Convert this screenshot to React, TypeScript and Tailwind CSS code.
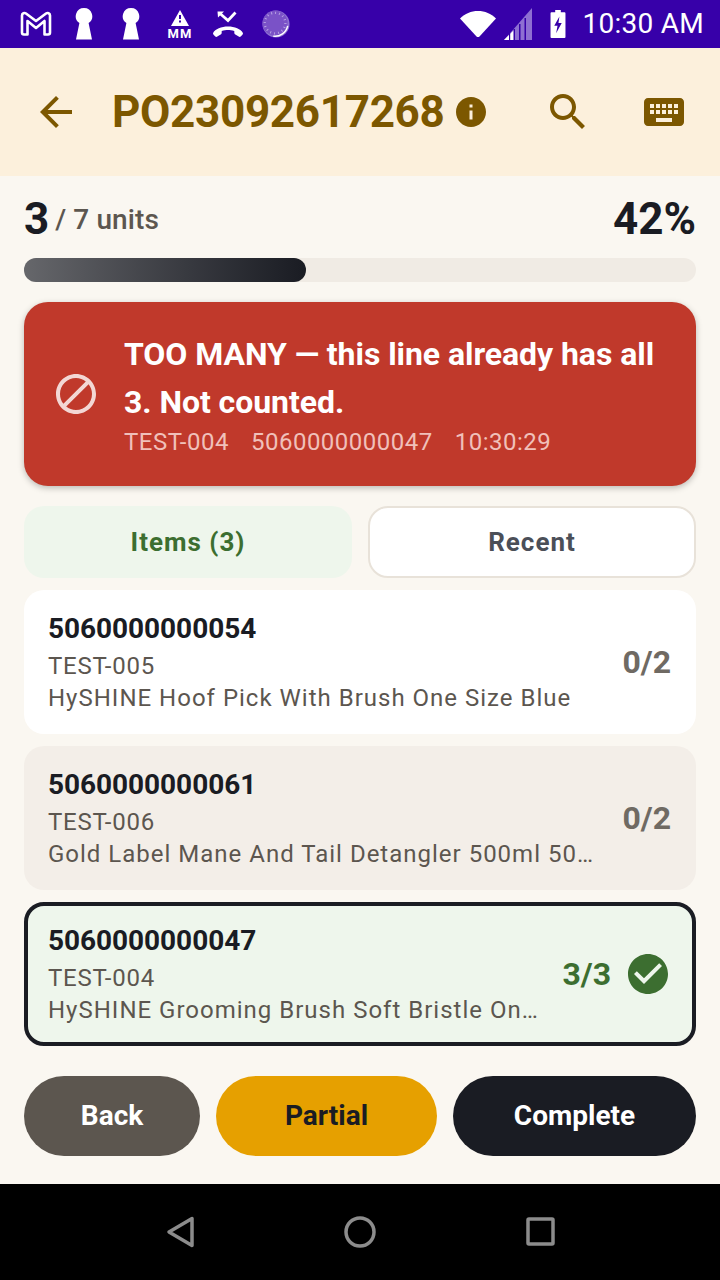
import type { ReactNode } from 'react';

const FONT = 'font-["Roboto","Noto_Sans",sans-serif]';

interface Line {
  code: string;
  sku: string;
  name: string;
  count: string;
  tone: 'white' | 'muted' | 'active';
}

const LINES: Line[] = [
  { code: '5060000000054', sku: 'TEST-005', name: 'HySHINE Hoof Pick With Brush One Size Blue', count: '0/2', tone: 'white' },
  { code: '5060000000061', sku: 'TEST-006', name: 'Gold Label Mane And Tail Detangler 500ml 50…', count: '0/2', tone: 'muted' },
  { code: '5060000000047', sku: 'TEST-004', name: 'HySHINE Grooming Brush Soft Bristle On…', count: '3/3', tone: 'active' },
];

// Material icons on their 24 unit grid
function Mi({ size, d, fill, className }: { size: number; d: string; fill: string; className?: string }): ReactNode {
  return (
    <svg width={size} height={size} viewBox="0 0 24 24" fill={fill} className={className}>
      <path d={d} />
    </svg>
  );
}

const ARROW_BACK = 'M20 11H7.830l5.590-5.590L12 4l-8 8 8 8 1.410-1.410L7.830 13H20v-2z';
const INFO = 'M12 2C6.480 2 2 6.480 2 12s4.480 10 10 10 10-4.480 10-10S17.520 2 12 2zm1 15h-2v-6h2v6zm0-8h-2V7h2v2z';
const SEARCH = 'M15.500 14h-.790l-.280-.270C15.410 12.590 16 11.110 16 9.500 16 5.910 13.090 3 9.500 3S3 5.910 3 9.500 5.910 16 9.500 16c1.610 0 3.090-.590 4.230-1.570l.270.280v.790l5 4.990L20.490 19l-4.990-5zm-6 0C7.010 14 5 11.990 5 9.500S7.010 5 9.500 5 14 7.010 14 9.500 11.990 14 9.500 14z';
const KEYBOARD = 'M20 5H4c-1.100 0-1.990.900-1.990 2L2 17c0 1.100.900 2 2 2h16c1.100 0 2-.900 2-2V7c0-1.100-.900-2-2-2zm-9 3h2v2h-2V8zm0 3h2v2h-2v-2zM8 8h2v2H8V8zm0 3h2v2H8v-2zm-1 2H5v-2h2v2zm0-3H5V8h2v2zm9 7H8v-2h8v2zm0-4h-2v-2h2v2zm0-3h-2V8h2v2zm3 3h-2v-2h2v2zm0-3h-2V8h2v2z';
const BLOCK = 'M12 2C6.480 2 2 6.480 2 12s4.480 10 10 10 10-4.480 10-10S17.520 2 12 2zM4 12c0-4.420 3.580-8 8-8 1.850 0 3.550.630 4.900 1.690L5.690 16.900C4.630 15.550 4 13.850 4 12zm8 8c-1.850 0-3.550-.630-4.900-1.690L18.310 7.100C19.370 8.450 20 10.150 20 12c0 4.420-3.580 8-8 8z';
const CHECK_CIRCLE = 'M12 2C6.480 2 2 6.480 2 12s4.480 10 10 10 10-4.480 10-10S17.520 2 12 2zm-2 15l-5-5 1.410-1.410L10 14.170l7.590-7.590L19 8l-9 9z';

// ── Status bar ──────────────────────────────────────────────────────────────

function Keyhole() {
  return (
    <svg width="20" height="32" viewBox="0 0 20 32" fill="white">
      <path d="M10 0a8.2 8.2 0 0 1 4.600 15L18 31.500H2L5.400 15A8.2 8.2 0 0 1 10 0z" />
    </svg>
  );
}

function StatusBar() {
  return (
    <div className="flex h-12 shrink-0 items-center bg-[#3700a9] pl-5 pr-4">
      <svg width="32" height="26" viewBox="0 0 32 26" fill="none" className="mr-[22px]">
        <path d="M2 4.500v17a2 2 0 0 0 2 2h3.500V10L16 17l8.500-7v13.500H28a2 2 0 0 0 2-2v-17C30 2 27.500 1.500 26 2.500L16 10 6 2.500C4.500 1.500 2 2 2 4.500z" stroke="white" strokeWidth="2.600" strokeLinejoin="round" />
      </svg>
      <div className="mr-[27px]"><Keyhole /></div>
      <div className="mr-[26px]"><Keyhole /></div>
      <div className="mr-[20px] flex w-[26px] flex-col items-center">
        <svg width="18" height="16" viewBox="0 0 18 16" className="mt-0.5">
          <path d="M9 0l9 16H0z" fill="white" />
          <rect x="8" y="5" width="2" height="4" fill="#3700a9" />
          <rect x="8" y="10.500" width="2" height="2" fill="#3700a9" />
        </svg>
        <span className={`${FONT} mt-px text-[13px] leading-[13px] font-bold tracking-[1px] text-white`}>MM</span>
      </div>
      <svg width="30" height="26" viewBox="0 0 30 26" className="mr-[19px]">
        <path d="M7 2.500l8 7L22.500 1.500" fill="none" stroke="white" strokeWidth="2.800" />
        <path d="M4.500 0.500h6.500L5 6.500z" fill="white" />
        <path transform="translate(0 1.500)" d="M.8 22.500c-.6-.6-.9-1.300-.7-2.100C2 16.500 8.500 14 15 14s13 2.500 14.900 6.400c.2.800-.1 1.500-.7 2.100l-1.500 1.500c-.6.600-1.400.600-2 .100l-3.800-2.300c-.5-.4-.6-.9-.6-1.500v-1.700c-2.300-.9-4.400-1.100-6.300-1.100s-4 .2-6.300 1.100v1.700c0 .6-.1 1.100-.6 1.500l-3.800 2.300c-.6.500-1.400.5-2-.1z" fill="white" />
      </svg>
      <svg width="28" height="28" viewBox="0 0 30 30">
        <circle cx="15" cy="15" r="14.500" fill="#8f73d3" />
        <circle cx="14" cy="14" r="13.500" fill="#7a52c7" />
        <circle cx="14" cy="14" r="11" fill="none" stroke="#b9a4e4" strokeWidth="2.500" strokeDasharray="1 3.300" />
        <path d="M27.500 17a14 14 0 0 1-15.500 11" fill="none" stroke="white" strokeWidth="1.500" />
      </svg>
      <div className="ml-auto flex items-center">
        <svg width="36" height="28" viewBox="0 0 36 28" className="mr-[8px]">
          <path d="M0 8.500C5 3.500 11 1 18 1s13 2.500 18 7.500L19.500 26.500c-.8.800-2.200.8-3 0z" fill="white" />
        </svg>
        <svg width="28" height="32" viewBox="0 0 28 32" className="mr-[18px]">
          <path d="M28 0v32H0z" fill="#8e6fd2" />
          <path d="M10 22v10h-10z" fill="white" />
          <rect x="9.500" y="21" width="1.500" height="11" fill="#3700a9" />
          <rect x="5" y="25" width="1.200" height="7" fill="#3700a9" />
          <rect x="15" y="16" width="1.500" height="16" fill="#3700a9" />
          <rect x="20.500" y="10" width="1.500" height="22" fill="#3700a9" />
          <rect x="11" y="28" width="4" height="4" fill="#8e6fd2" />
        </svg>
        <svg width="16" height="28" viewBox="0 0 16 30" className="mr-[17px]">
          <path d="M5 0h6v2.500h4a1 1 0 0 1 1 1V29a1 1 0 0 1-1 1H1a1 1 0 0 1-1-1V3.500a1 1 0 0 1 1-1h4z" fill="white" />
          <path d="M9.500 7L4 17h3.500L6 25l6-11H8.500z" fill="#3700a9" />
        </svg>
        <span className={`${FONT} text-[28px] leading-none font-normal tracking-[0.25px] text-white`}>10:30 AM</span>
      </div>
    </div>
  );
}

// ── Header ──────────────────────────────────────────────────────────────────

function Header() {
  return (
    <div className="flex h-32 shrink-0 items-center bg-[#fcf0dc] text-[#7c5700]">
      <Mi size={48} d={ARROW_BACK} fill="#7c5700" className="ml-8 shrink-0" />
      <span className="ml-8 w-[341px] text-[44px] leading-none font-bold tracking-[-0.3px]">PO23092617268</span>
      <Mi size={36} d={INFO} fill="#7c5700" className="shrink-0" />
      <Mi size={48} d={SEARCH} fill="#7c5700" className="ml-[55px] shrink-0" />
      <Mi size={48} d={KEYBOARD} fill="#7c5700" className="ml-12 shrink-0" />
    </div>
  );
}

// ── List card ───────────────────────────────────────────────────────────────

function LineCard({ line }: { line: Line }) {
  const active = line.tone === 'active';
  const bg = line.tone === 'white' ? 'bg-white' : line.tone === 'muted' ? 'bg-[#f3eee8]' : 'bg-[#eef6ec] border-4 border-[#1a1c23]';
  return (
    <div className={`flex h-36 items-center justify-between rounded-[20px] ${bg} ${active ? 'pl-5 pr-6' : 'pl-6 pr-[25px]'}`}>
      <div className="min-w-0 whitespace-nowrap pt-[3px]">
        <div className="text-[28px] leading-8 font-bold tracking-[-0.05px] text-[#1a1c23]">{line.code}</div>
        <div className="mt-[5px] text-[24px] leading-8 tracking-[0.75px] text-[#5c564f]">{line.sku}</div>
        <div className="text-[24px] leading-8 tracking-[1px] text-[#5c564f]">{line.name}</div>
      </div>
      {active ? (
        <div className="flex shrink-0 items-center gap-[17px]">
          <span className="text-[32px] leading-none font-bold text-[#3c6e30]">{line.count}</span>
          <Mi size={48} d={CHECK_CIRCLE} fill="#3c6e30" className="-mx-1" />
        </div>
      ) : (
        <span className="shrink-0 text-[32px] leading-none font-bold text-[#6f6a63]">{line.count}</span>
      )}
    </div>
  );
}

export default function App() {
  return (
    <div className={`${FONT} flex h-[1280px] w-[720px] flex-col overflow-hidden bg-[#faf7f1]`}>
      <StatusBar />
      <Header />

      <div className="flex flex-1 flex-col px-6">
        {/* Progress */}
        <div className="mt-[17px] flex h-[52px] items-center justify-between text-[#1a1c23]">
          <div className="flex items-center gap-1.5">
            <span className="text-[44px] leading-none font-bold">3</span>
            <span className="mt-0.5 text-[28px] leading-none font-medium tracking-[0.1px] text-[#5c564f]">/ 7 units</span>
          </div>
          <span className="text-[44px] leading-none font-bold">42%</span>
        </div>
        <div className="mt-[13px] h-6 rounded-full bg-[#f0ebe4]">
          <div className="h-6 w-[282px] rounded-full bg-gradient-to-r from-[#66676b] to-[#1a1c23]" />
        </div>

        {/* Alert */}
        <div className="mt-5 flex h-[184px] items-center rounded-[24px] bg-[#c0392b] pl-7 pr-6 shadow-[0_2px_6px_rgba(0,0,0,0.25)]">
          <Mi size={48} d={BLOCK} fill="rgba(255,255,255,0.8)" className="shrink-0" />
          <div className="ml-6 min-w-0 flex-1">
            <div className="text-[32px] leading-[48px] font-bold tracking-[-0.06px] text-white">TOO MANY — this line already has all 3. Not counted.</div>
            <div className="flex gap-[22px] text-[24px] leading-8 tracking-[0.5px] text-[#f0c0ba]">
              <span>TEST-004</span>
              <span>5060000000047</span>
              <span>10:30:29</span>
            </div>
          </div>
        </div>

        {/* Tabs */}
        <div className="mt-5 grid grid-cols-2 gap-4">
          <div className="flex h-[72px] items-center justify-center rounded-[20px] bg-[#eef6ec] text-[26px] font-bold tracking-[1px] text-[#3c6e30]">Items (3)</div>
          <div className="flex h-[72px] items-center justify-center rounded-[20px] border-2 border-[#e8e2d9] bg-white text-[26px] font-bold tracking-[1px] text-[#4b4f58]">Recent</div>
        </div>

        {/* Lines */}
        <div className="mt-3 flex flex-col gap-3">
          {LINES.map(line => <LineCard key={line.code} line={line} />)}
        </div>

        {/* Actions */}
        <div className="mt-[30px] flex gap-4 text-[28px] font-bold">
          <button className="h-20 w-[176px] rounded-full bg-[#5c564f] text-white">Back</button>
          <button className="h-20 w-[221px] rounded-full bg-[#e6a000] text-[#1a1c23]">Partial</button>
          <button className="h-20 w-[243px] rounded-full bg-[#1a1c23] text-white">Complete</button>
        </div>
      </div>

      {/* Nav bar */}
      <div className="flex h-24 shrink-0 items-center justify-center bg-black">
        <svg width="400" height="32" viewBox="0 0 400 32" fill="none" stroke="#8c8c8c" strokeWidth="3.500" strokeLinejoin="round">
          <path d="M9 16L32 2.500v27z" />
          <circle cx="200" cy="16" r="14" />
          <rect x="368" y="3" width="25" height="25" rx="1" />
        </svg>
      </div>
    </div>
  );
}
